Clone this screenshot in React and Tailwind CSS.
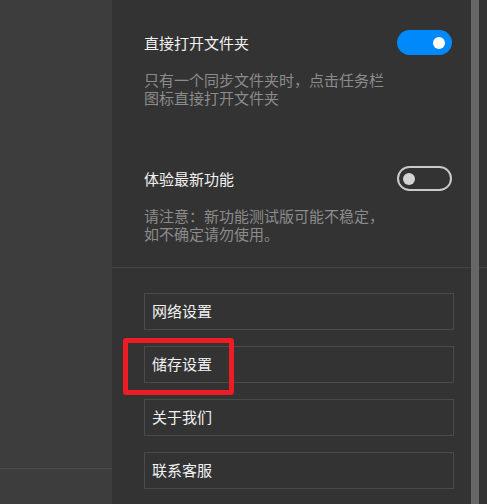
import React from 'react';

const links = ['网络设置', '储存设置', '关于我们', '联系客服'];

function Toggle({ on }) {
  return on ? (
    <div className="flex h-[25px] w-[55px] shrink-0 items-center justify-end rounded-full bg-[#0089fa] pr-[7px]">
      <div className="h-[12px] w-[12px] rounded-full bg-white" />
    </div>
  ) : (
    <div className="flex h-[25px] w-[55px] shrink-0 items-center rounded-full border-2 border-[#cacaca] pl-[4px]">
      <div className="h-[12px] w-[12px] rounded-full bg-[#d4d4d4]" />
    </div>
  );
}

function Option({ title, desc, on, className }) {
  return (
    <div className={className}>
      <div className="flex items-center justify-between pr-[19px]">
        <span className="text-[15px] leading-[18px] text-[#f2f2f2]">{title}</span>
        <Toggle on={on} />
      </div>
      <p className="mt-4 w-[250px] text-[15px] leading-[18px] text-[#8c8c8c]">{desc}</p>
    </div>
  );
}

export default function App() {
  return (
    <div
      className="relative flex h-[504px] w-[487px] overflow-hidden bg-[#333333]"
      style={{ fontFamily: '"Noto Sans CJK SC", "Noto Sans", sans-serif' }}
    >
      {/* left pane */}
      <div className="w-[112px] shrink-0 bg-[#3d3d3d]">
        <div className="h-[469px] border-b border-[#4a4a4a]" />
      </div>

      {/* settings pane */}
      <div className="flex w-[359px] shrink-0 flex-col">
        <div className="pl-8">
          <Option
            className="pt-[30px]"
            title="直接打开文件夹"
            desc="只有一个同步文件夹时，点击任务栏图标直接打开文件夹"
            on
          />
          <Option
            className="pt-[59px]"
            title="体验最新功能"
            desc="请注意：新功能测试版可能不稳定，如不确定请勿使用。"
          />
        </div>
        <div className="mt-[24px] w-[375px] border-t border-[#454545]" />
        <div className="flex flex-col gap-4 pl-8 pt-[25px]">
          {links.map((l) => (
            <div
              key={l}
              className="flex h-[37px] w-[310px] items-center border border-[#4a4a4a] pl-[7px] text-[15px] text-[#f2f2f2]"
            >
              {l}
            </div>
          ))}
        </div>
      </div>

      {/* scrollbar */}
      <div className="w-[8px] shrink-0 bg-[#666666]" />

      {/* annotation */}
      <div className="absolute left-[123px] top-[338px] h-[57px] w-[111px] rounded-[3px] border-[5px] border-[#ee1c25]" />
    </div>
  );
}
